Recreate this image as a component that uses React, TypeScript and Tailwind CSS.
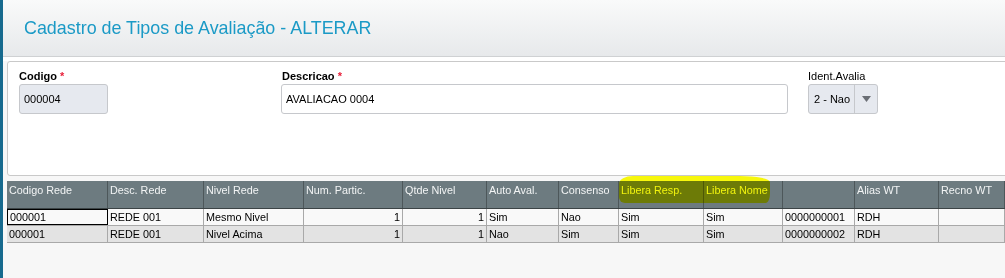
import React from 'react';

const columns = [
  { label: 'Codigo Rede', align: 'left' },
  { label: 'Desc. Rede', align: 'left' },
  { label: 'Nivel Rede', align: 'left' },
  { label: 'Num. Partic.', align: 'right' },
  { label: 'Qtde Nivel', align: 'right' },
  { label: 'Auto Aval.', align: 'left' },
  { label: 'Consenso', align: 'left' },
  { label: 'Libera Resp.', align: 'left' },
  { label: 'Libera Nome', align: 'left' },
  { label: '', align: 'left' },
  { label: 'Alias WT', align: 'left' },
  { label: 'Recno WT', align: 'left' },
];

const rows = [
  ['000001', 'REDE 001', 'Mesmo Nivel', '1', '1', 'Sim', 'Nao', 'Sim', 'Sim', '0000000001', 'RDH', ''],
  ['000001', 'REDE 001', 'Nivel Acima', '1', '1', 'Nao', 'Sim', 'Sim', 'Sim', '0000000002', 'RDH', ''],
];

const gridCols = 'grid grid-cols-[101px_96px_100px_99px_84px_72px_60px_85px_79px_72px_84px_1fr]';

export default function App() {
  return (
    <div className="w-[1005px] h-[278px] flex overflow-hidden bg-[#f7f7f7] font-['Liberation_Sans',Arial,sans-serif]">
      {/* left accent stripe */}
      <div className="w-[3px] shrink-0 bg-[#176a8e]" />

      <div className="flex-1 flex flex-col min-w-0">
        {/* title bar */}
        <div className="h-[57px] shrink-0 flex items-center pl-[21px] pt-[2px] bg-gradient-to-b from-[#f9fafa] to-[#e7e9eb] border-b border-[#cfd1d3]">
          <h1 className="text-[17.9px] text-[#1b9ac6] leading-none">Cadastro de Tipos de Avaliação - ALTERAR</h1>
        </div>
        <div className="h-[4px] shrink-0 bg-white" />

        {/* form panel */}
        <div className="ml-[4px] -mr-[6px] h-[115px] shrink-0 bg-white border border-[#c9c9c9] rounded-[3px] flex pt-[7px]">
          <div className="ml-[11px] w-[263px] flex flex-col">
            <label className="text-[11px] font-bold text-black leading-[14px]">
              Codigo <span className="text-[#e8203a]">*</span>
            </label>
            <div className="mt-[1px] w-[89px] h-[30px] bg-[#e6e9ef] border border-[#c6c8cc] rounded-[3px] flex items-center pl-[4px] text-[11px] text-black">
              000004
            </div>
          </div>
          <div className="w-[526px] flex flex-col">
            <label className="text-[11px] font-bold text-black leading-[14px]">
              Descricao <span className="text-[#e8203a]">*</span>
            </label>
            <div className="mt-[1px] -ml-[1px] w-[507px] h-[30px] bg-white border border-[#c6c8cc] rounded-[3px] flex items-center pl-[4px] text-[11px] text-black">
              AVALIACAO 0004
            </div>
          </div>
          <div className="flex flex-col">
            <label className="text-[11px] text-black leading-[14px]">Ident.Avalia</label>
            <div className="mt-[1px] w-[70px] h-[30px] bg-[#e6e9ef] border border-[#c6c8cc] rounded-[3px] flex text-[11px] text-black">
              <div className="w-[46px] flex items-center pl-[5px] border-r border-[#c6c8cc]">2 - Nao</div>
              <div className="flex-1 flex items-center justify-center">
                <svg width="9" height="6" viewBox="0 0 9 6">
                  <path d="M0 0 H9 L4.5 6 Z" fill="#6b6f75" />
                </svg>
              </div>
            </div>
          </div>
        </div>

        {/* grid */}
        <div className="relative mt-[5px] ml-[4px]">
          <div className={`${gridCols} h-[28px] bg-[#6d7b80] border-b border-[#3c4446]`}>
            {columns.map((c, i) => (
              <div key={i} className="border-r border-[#4d575a] pl-[2px] pt-[3px] text-[10.8px] leading-[13px] text-[#f2f4f4] whitespace-nowrap overflow-hidden">
                {c.label}
              </div>
            ))}
          </div>
          {rows.map((r, ri) => (
            <div key={ri} className={`${gridCols} h-[17px] border-b border-[#a9a9a9] ${ri === 0 ? 'bg-[#f9f9f9]' : 'bg-[#e3e3e3]'}`}>
              {r.map((v, ci) => (
                <div
                  key={ci}
                  className={`flex items-center text-[10.8px] text-black whitespace-nowrap overflow-hidden px-[2px] ${
                    columns[ci].align === 'right' ? 'justify-end' : ''
                  } ${ri === 0 && ci === 0 ? 'border border-black' : 'border-r border-[#a9a9a9]'}`}
                >
                  {v}
                </div>
              ))}
            </div>
          ))}

          {/* highlighter mark over Libera Resp. / Libera Nome */}
          <div className="absolute left-[612px] top-[-5px] w-[151px] h-[27px] bg-[#ffff00] mix-blend-multiply rounded-tl-[14px_8px] rounded-tr-[30px_6px] rounded-bl-[6px] rounded-br-[4px_10px] opacity-95" />
        </div>
      </div>
    </div>
  );
}
